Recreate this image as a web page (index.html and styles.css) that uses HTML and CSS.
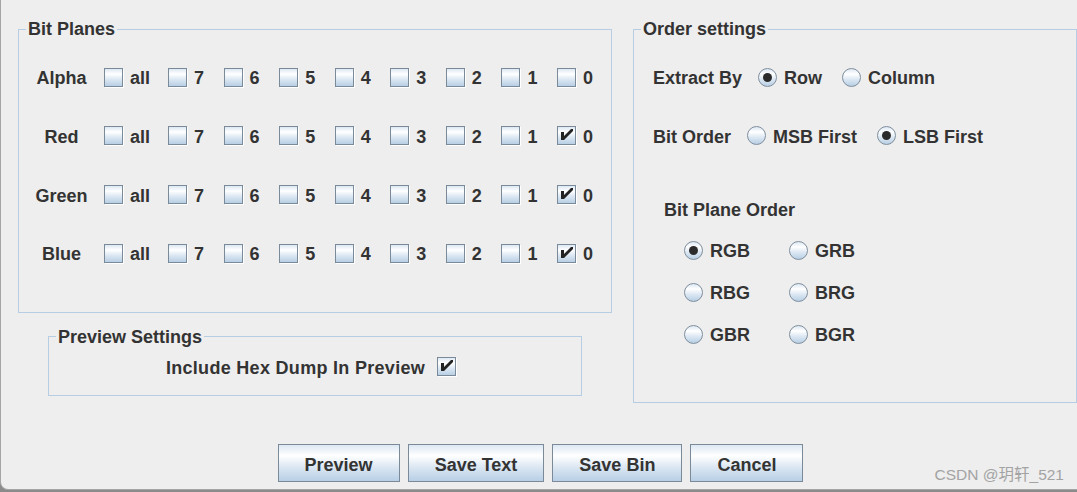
FILE: index.html
```html
<!DOCTYPE html>
<html lang="en">
<head>
    <meta charset="UTF-8">
    <meta name="viewport" content="width=device-width, initial-scale=1.0">
    <title>Extract Preview</title>
    <link rel="stylesheet" href="styles.css">
</head>
<body>
    <div class="dialog">
        <div class="panels">
            <div class="left-col">
                <fieldset class="group">
                    <legend>Bit Planes</legend>
                    <div class="plane-grid">
                        <span class="plane-name">Alpha</span>
                        <label class="check"><span class="box"></span>all</label>
                        <label class="check"><span class="box"></span>7</label>
                        <label class="check"><span class="box"></span>6</label>
                        <label class="check"><span class="box"></span>5</label>
                        <label class="check"><span class="box"></span>4</label>
                        <label class="check"><span class="box"></span>3</label>
                        <label class="check"><span class="box"></span>2</label>
                        <label class="check"><span class="box"></span>1</label>
                        <label class="check"><span class="box"></span>0</label>

                        <span class="plane-name">Red</span>
                        <label class="check"><span class="box"></span>all</label>
                        <label class="check"><span class="box"></span>7</label>
                        <label class="check"><span class="box"></span>6</label>
                        <label class="check"><span class="box"></span>5</label>
                        <label class="check"><span class="box"></span>4</label>
                        <label class="check"><span class="box"></span>3</label>
                        <label class="check"><span class="box"></span>2</label>
                        <label class="check"><span class="box"></span>1</label>
                        <label class="check"><span class="box"><svg viewBox="1 1 17 17"><polygon points="4,6 7,6 7,10 14,3 16,3 16,5 7,14 4,14"/></svg></span>0</label>

                        <span class="plane-name">Green</span>
                        <label class="check"><span class="box"></span>all</label>
                        <label class="check"><span class="box"></span>7</label>
                        <label class="check"><span class="box"></span>6</label>
                        <label class="check"><span class="box"></span>5</label>
                        <label class="check"><span class="box"></span>4</label>
                        <label class="check"><span class="box"></span>3</label>
                        <label class="check"><span class="box"></span>2</label>
                        <label class="check"><span class="box"></span>1</label>
                        <label class="check"><span class="box"><svg viewBox="1 1 17 17"><polygon points="4,6 7,6 7,10 14,3 16,3 16,5 7,14 4,14"/></svg></span>0</label>

                        <span class="plane-name">Blue</span>
                        <label class="check"><span class="box"></span>all</label>
                        <label class="check"><span class="box"></span>7</label>
                        <label class="check"><span class="box"></span>6</label>
                        <label class="check"><span class="box"></span>5</label>
                        <label class="check"><span class="box"></span>4</label>
                        <label class="check"><span class="box"></span>3</label>
                        <label class="check"><span class="box"></span>2</label>
                        <label class="check"><span class="box"></span>1</label>
                        <label class="check"><span class="box"><svg viewBox="1 1 17 17"><polygon points="4,6 7,6 7,10 14,3 16,3 16,5 7,14 4,14"/></svg></span>0</label>
                    </div>
                </fieldset>

                <fieldset class="group preview">
                    <legend>Preview Settings</legend>
                    <label class="hex-row">Include Hex Dump In Preview<span class="box"><svg viewBox="1 1 17 17"><polygon points="4,6 7,6 7,10 14,3 16,3 16,5 7,14 4,14"/></svg></span></label>
                </fieldset>
            </div>

            <fieldset class="group order">
                <legend>Order settings</legend>
                <div class="order-body">
                    <div class="order-row">
                        <span class="caption">Extract By</span>
                        <label class="opt"><span class="radio on"></span>Row</label>
                        <label class="opt"><span class="radio"></span>Column</label>
                    </div>
                    <div class="order-row">
                        <span class="caption">Bit Order</span>
                        <label class="opt"><span class="radio"></span>MSB First</label>
                        <label class="opt"><span class="radio on"></span>LSB First</label>
                    </div>
                    <div class="plane-order">
                        <div class="sub-title">Bit Plane Order</div>
                        <div class="plane-radios">
                            <label class="opt"><span class="radio on"></span>RGB</label>
                            <label class="opt"><span class="radio"></span>GRB</label>
                            <label class="opt"><span class="radio"></span>RBG</label>
                            <label class="opt"><span class="radio"></span>BRG</label>
                            <label class="opt"><span class="radio"></span>GBR</label>
                            <label class="opt"><span class="radio"></span>BGR</label>
                        </div>
                    </div>
                </div>
            </fieldset>
        </div>

        <div class="buttons">
            <button>Preview</button>
            <button>Save Text</button>
            <button>Save Bin</button>
            <button>Cancel</button>
        </div>

        <span class="watermark">CSDN @玥轩_521</span>
    </div>
</body>
</html>
```

FILE: styles.css
```css
* {
    box-sizing: border-box;
}
body {
    margin: 0;
    background-color: #8a8a8a;
    font-family: "Liberation Sans", Arial, sans-serif;
    font-weight: bold;
    font-size: 18px;
    color: #333;
    overflow: hidden;
}
.dialog {
    position: relative;
    width: 1080px;
    height: 490px;
    background-color: #eeeeee;
    border-left: 1px solid #a4a4a4;
    border-bottom: 1px solid #a4a4a4;
    border-bottom-left-radius: 8px;
}
.panels {
    display: flex;
    align-items: flex-start;
    padding: 19px 0 0 17px;
}
.left-col {
    width: 594px;
}

/* titled borders */
.group {
    margin: 0;
    padding: 0;
    min-width: 0;
    border: 1px solid #b6cde4;
}
.group legend {
    margin-left: 7px;
    padding: 0 2px;
    line-height: 20px;
}

/* bit planes */
.plane-grid {
    display: grid;
    grid-template-columns: 85px 64px repeat(7, 55.57px) 1fr;
    grid-auto-rows: 58.67px;
    align-items: center;
    padding: 9px 0 29.33px;
    line-height: 20px;
}
.plane-name {
    justify-self: center;
    padding-top: 2px;
}
.check {
    display: flex;
    align-items: center;
    gap: 7px;
    padding-top: 2px;
}
.box {
    display: inline-block;
    width: 19px;
    height: 19px;
    margin-top: -2px;
    border: 1px solid #7a8a99;
    box-shadow: 1px 1px 0 #fff;
    background: linear-gradient(to bottom, #dde8f3 0%, #fff 30%, #dde8f3 60%, #b8cfe5 100%);
}
.box svg {
    display: block;
    width: 17px;
    height: 17px;
    fill: #222;
}

/* preview settings */
.preview {
    margin: 14px 0 0 30px;
    width: 534px;
}
.hex-row {
    display: flex;
    justify-content: center;
    align-items: center;
    gap: 12px;
    padding: 11px 8px 17px 0;
    line-height: 20px;
    letter-spacing: 0.3px;
}

/* order settings */
.order {
    width: 444px;
    margin-left: 21px;
}
.order-body {
    padding: 9px 0 46.5px 19px;
    line-height: 20px;
}
.order-row {
    display: flex;
    align-items: center;
    gap: 12px;
    height: 58.67px;
}
.caption {
    padding-top: 2px;
}
.opt {
    display: flex;
    align-items: center;
    gap: 7px;
    padding: 2px 4px 0;
}
.plane-radios .opt {
    padding: 2px 0 0;
}
.radio {
    display: inline-flex;
    align-items: center;
    justify-content: center;
    width: 19px;
    height: 19px;
    margin-top: -2px;
    border-radius: 50%;
    border: 1px solid #7f8e9d;
    background: linear-gradient(to bottom, #dde8f3 0%, #fff 30%, #dde8f3 60%, #b8cfe5 100%);
}
.radio.on::after {
    content: "";
    width: 9px;
    height: 9px;
    border-radius: 50%;
    background-color: #2b2b2b;
}
.plane-order {
    margin-top: 34px;
    padding-left: 11px;
}
.sub-title {
    padding-top: 1px;
}
.plane-radios {
    display: grid;
    grid-template-columns: 105px 105px;
    grid-auto-rows: 42px;
    align-items: center;
    margin-top: 9px;
    padding-left: 20px;
}

/* buttons */
.buttons {
    display: flex;
    justify-content: center;
    gap: 8px;
    margin-top: 41px;
}
button {
    height: 38px;
    margin: 0;
    padding: 6px 26px 0;
    font: inherit;
    color: #333;
    border: 1px solid #7a8a99;
    background: linear-gradient(to bottom, #dde8f3 0%, #fff 30%, #dde8f3 60%, #b8cfe5 100%);
}

.watermark {
    position: absolute;
    right: 16px;
    bottom: 5px;
    font-family: "Liberation Sans", "Noto Sans CJK SC", sans-serif;
    font-weight: normal;
    font-size: 15.5px;
    line-height: 18px;
    color: #a3a3a3;
}
```
